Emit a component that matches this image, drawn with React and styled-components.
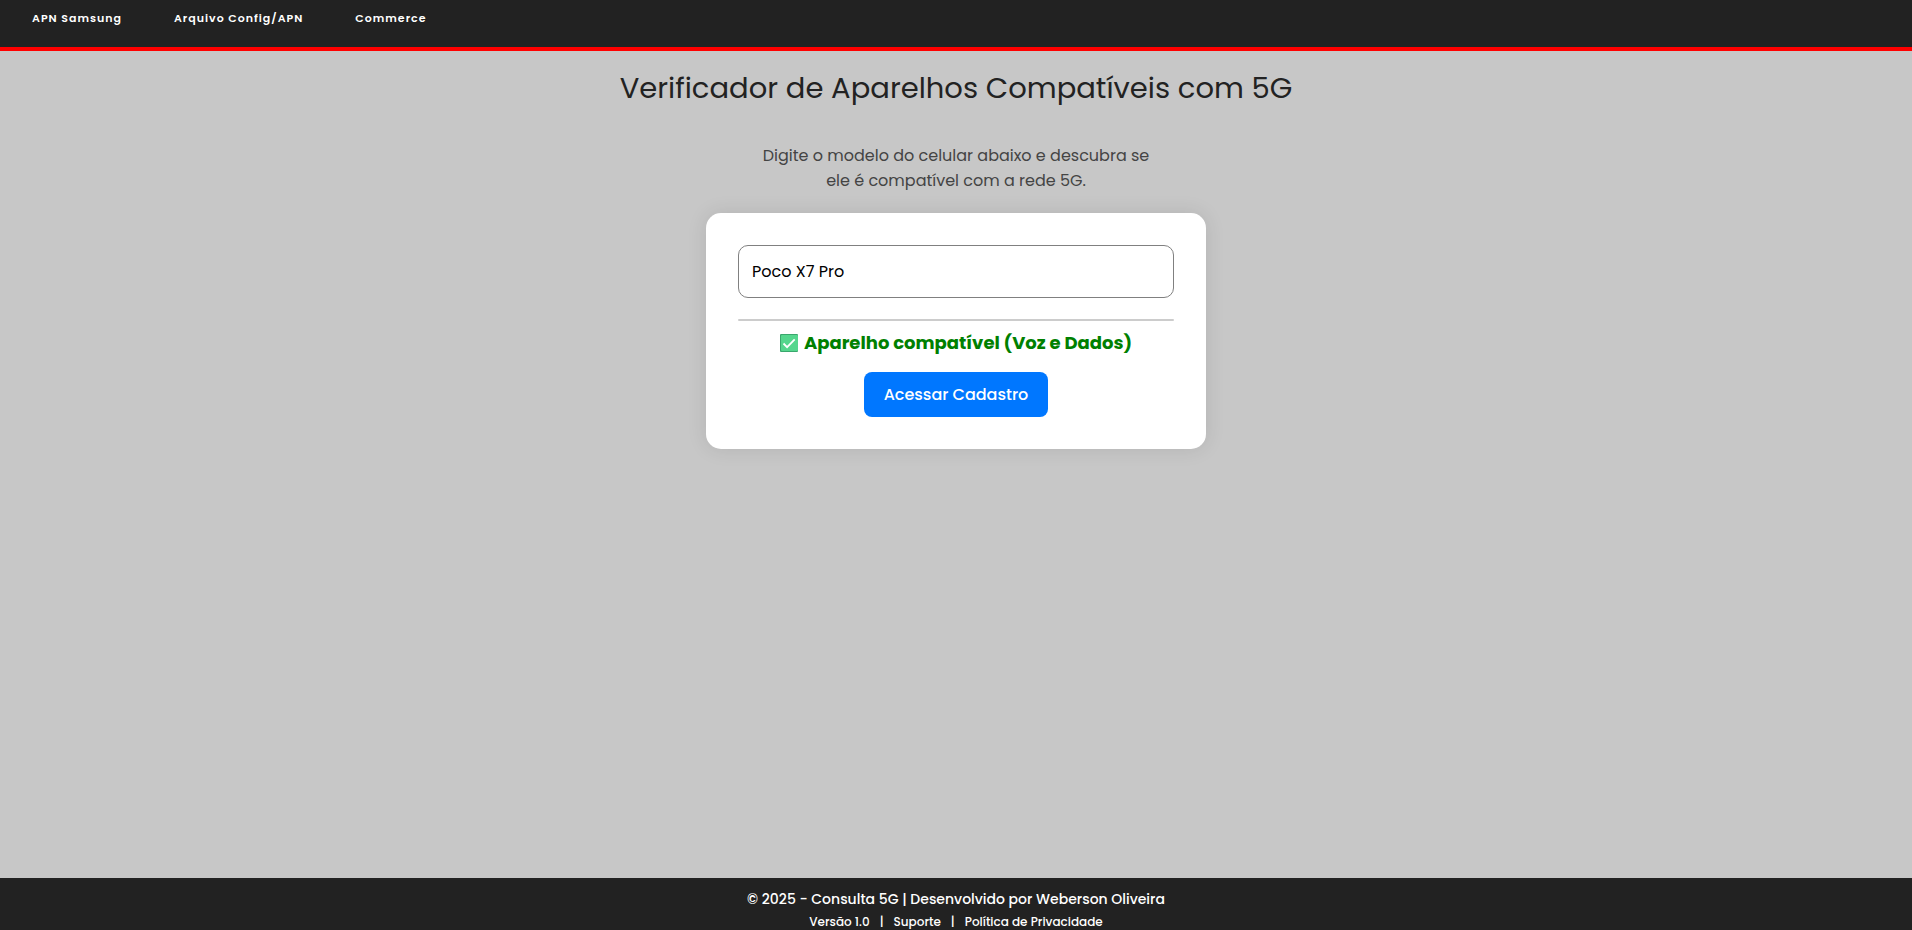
import React, { useState } from "react";
import styled, { createGlobalStyle } from "styled-components";

const GlobalStyle = createGlobalStyle`
  *, *::before, *::after { box-sizing: border-box; }
  body {
    margin: 0;
    background: #c7c7c7;
    color: #222;
    font-family: Poppins, Inter, "Open Sans", sans-serif;
  }
`;

const Page = styled.div`
  display: flex;
  flex-direction: column;
  min-height: 100vh;
`;

const Header = styled.header`
  background: #222;
  border-bottom: 4px solid #f00;
  padding: 10px 32px 21px;
`;

const Nav = styled.nav`
  display: flex;
  gap: 52px;
`;

const NavLink = styled.a`
  color: #fff;
  font-size: 11px;
  line-height: 16px;
  font-weight: 600;
  letter-spacing: 1px;
  text-decoration: none;
`;

const Main = styled.main`
  flex: 1;
  display: flex;
  flex-direction: column;
  align-items: center;
  padding: 16px;
`;

const Title = styled.h1`
  margin: 0 0 34px;
  font-size: 29px;
  line-height: 42px;
  font-weight: 400;
  text-align: center;
`;

const Intro = styled.label`
  margin: 0 0 20px;
  max-width: 420px;
  color: #444;
  font-size: 16px;
  line-height: 25px;
  text-align: center;
`;

const Card = styled.section`
  display: flex;
  flex-direction: column;
  align-items: center;
  width: 100%;
  max-width: 500px;
  padding: 32px;
  border-radius: 15px;
  background: #fff;
  box-shadow: 0 0 20px rgba(0, 0, 0, 0.1);
`;

const ModelInput = styled.input`
  width: 100%;
  height: 53px;
  padding: 0 13px;
  border: 1px solid #808080;
  border-radius: 10px;
  background: #fff;
  color: #000;
  font-family: inherit;
  font-size: 16px;
  outline: none;
`;

const Divider = styled.hr`
  width: 100%;
  height: 2px;
  margin: 21px 0 8px;
  border: 0;
  border-radius: 1px;
  background: #ccc;
`;

const Result = styled.p`
  display: flex;
  align-items: center;
  gap: 6px;
  margin: 0 0 15px;
  color: #008000;
  font-size: 18px;
  line-height: 28px;
  font-weight: 700;
`;

const ActionButton = styled.button`
  height: 45px;
  padding: 0 20px;
  border: 0;
  border-radius: 8px;
  background: #07f;
  color: #fff;
  font-family: inherit;
  font-size: 16px;
  font-weight: 500;
  cursor: pointer;
`;

const Footer = styled.footer`
  display: flex;
  flex-direction: column;
  align-items: center;
  gap: 4px;
  padding-top: 10px;
  background: #222;
  color: #fff;
  font-weight: 500;
`;

const Credit = styled.p`
  margin: 0;
  font-size: 14px;
  line-height: 22px;
`;

const FooterLinks = styled.div`
  display: flex;
  gap: 10px;
  font-size: 12px;
  line-height: 16px;
`;

const FooterLink = styled.a`
  color: inherit;
  text-decoration: none;
`;

function CheckIcon() {
  return (
    <svg width="18" height="18" viewBox="0 0 18 18" aria-hidden="true">
      <rect width="18" height="18" rx="1" fill="#3aa76d" />
      <rect x="1" y="1" width="17" height="16" rx="1" fill="#55d68d" />
      <path d="M3.5 9.5 7.1 13.1 14.7 5.3" fill="none" stroke="#fff" strokeWidth="1.8" />
    </svg>
  );
}

export default function App() {
  const [model, setModel] = useState("Poco X7 Pro");
  return (
    <>
      <GlobalStyle />
      <Page>
        <Header>
          <Nav>
            <NavLink href="#samsung">APN Samsung</NavLink>
            <NavLink href="#config">Arquivo Config/APN</NavLink>
            <NavLink href="#commerce">Commerce</NavLink>
          </Nav>
        </Header>
        <Main>
          <Title>Verificador de Aparelhos Compatíveis com 5G</Title>
          <Intro htmlFor="model">
            Digite o modelo do celular abaixo e descubra se
            <br />
            ele é compatível com a rede 5G.
          </Intro>
          <Card>
            <ModelInput
              id="model"
              type="text"
              value={model}
              onChange={(e) => setModel(e.target.value)}
            />
            <Divider />
            <Result>
              <CheckIcon />
              Aparelho compatível (Voz e Dados)
            </Result>
            <ActionButton type="button">Acessar Cadastro</ActionButton>
          </Card>
        </Main>
        <Footer>
          <Credit>© 2025 - Consulta 5G | Desenvolvido por Weberson Oliveira</Credit>
          <FooterLinks>
            <span>Versão 1.0</span>
            <span>|</span>
            <FooterLink href="#suporte">Suporte</FooterLink>
            <span>|</span>
            <FooterLink href="#privacidade">Política de Privacidade</FooterLink>
          </FooterLinks>
        </Footer>
      </Page>
    </>
  );
}
